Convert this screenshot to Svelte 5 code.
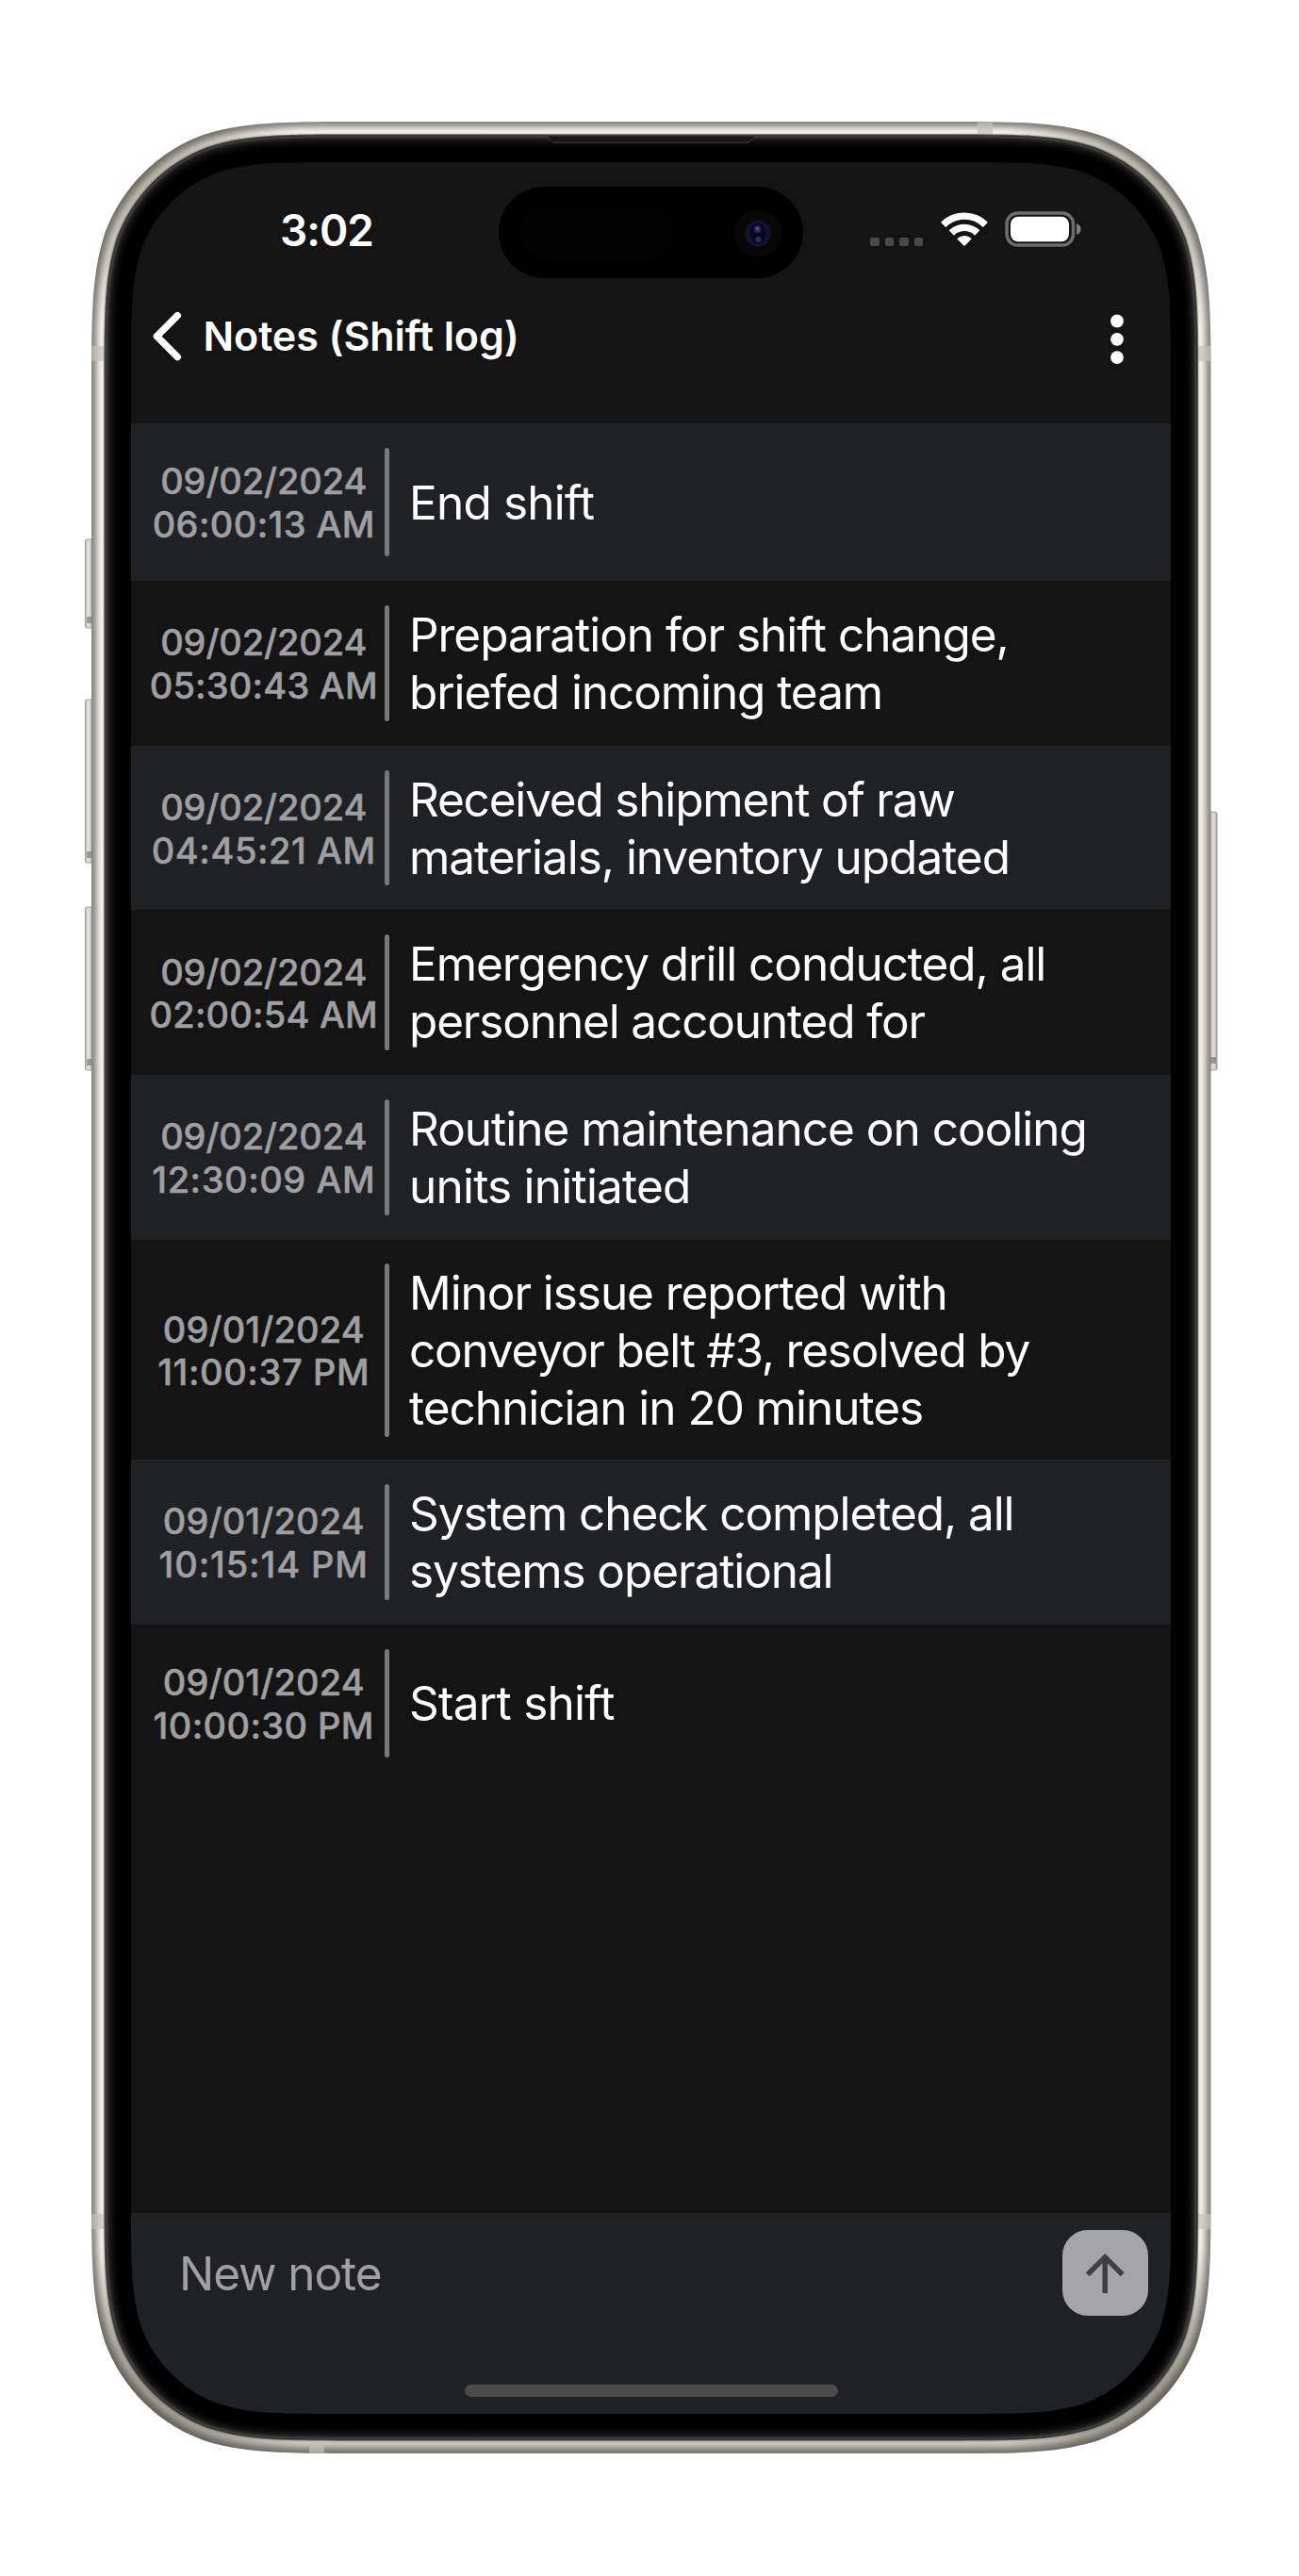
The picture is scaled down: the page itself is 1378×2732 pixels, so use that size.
<script>
  // Continuous-curvature rounded rectangle, as used for device outlines.
  function squircle(x, y, w, h, r) {
    const a = 1.528665 * r, b = 1.08849296 * r, c = 0.86840694 * r;
    const d = 0.63149379 * r, e = 0.07491139 * r, f = 0.37282383 * r, g = 0.16905956 * r;
    const R = x + w, B = y + h;
    return [
      `M${x + a} ${y}H${R - a}`,
      `C${R - b} ${y} ${R - c} ${y} ${R - d} ${y + e}`,
      `C${R - f} ${y + g} ${R - g} ${y + f} ${R - e} ${y + d}`,
      `C${R} ${y + c} ${R} ${y + b} ${R} ${y + a}`,
      `V${B - a}`,
      `C${R} ${B - b} ${R} ${B - c} ${R - e} ${B - d}`,
      `C${R - g} ${B - f} ${R - f} ${B - g} ${R - d} ${B - e}`,
      `C${R - c} ${B} ${R - b} ${B} ${R - a} ${B}`,
      `H${x + a}`,
      `C${x + b} ${B} ${x + c} ${B} ${x + d} ${B - e}`,
      `C${x + f} ${B - g} ${x + g} ${B - f} ${x + e} ${B - d}`,
      `C${x} ${B - c} ${x} ${B - b} ${x} ${B - a}`,
      `V${y + a}`,
      `C${x} ${y + b} ${x} ${y + c} ${x + e} ${y + d}`,
      `C${x + g} ${y + f} ${x + f} ${y + g} ${x + d} ${y + e}`,
      `C${x + c} ${y} ${x + b} ${y} ${x + a} ${y}Z`
    ].join('');
  }

  const W = 1187.5, H = 2473, RADIUS = 188;
  const ring = (inset) => squircle(inset, inset, W - 2 * inset, H - 2 * inset, RADIUS - inset);

  const metal = ['#8b8983', '#908e88', '#9b9993', '#a5a39c', '#b0aea7', '#bdbbb4', '#cac8c1', '#d7d4cc', '#e2dfd7', '#eae7df', '#f0ede5', '#f1eee6', '#dedbd2'];
  const bezel = ['#625f5a', '#2b2b2b', '#434444', '#343535', '#252626', '#1c1d1d', '#171717', '#131313', '#0f0f0f', '#0b0b0b', '#080808', '#060606', '#040404', '#020202', '#000'];

  const corners = [
    [50, 50, 0.34],
    [W - 50, 50, 0.34],
    [50, H - 50, 0.36],
    [W - 50, H - 50, 0.36]
  ];

  const screenClip = squircle(0, 0, 1103, 2388, 146);

  // Each line carries its own tracking in px.
  const notes = [
    { date: ['09/02/2024', -0.1], time: ['06:00:13 AM', 0.38], lines: [['End shift', -0.8]] },
    { date: ['09/02/2024', -0.1], time: ['05:30:43 AM', 0.2], lines: [['Preparation for shift change,', -1.03], ['briefed incoming team', -1.08]] },
    { date: ['09/02/2024', -0.1], time: ['04:45:21 AM', 0.55], lines: [['Received shipment of raw', -1.19], ['materials, inventory updated', -1.03]] },
    { date: ['09/02/2024', -0.1], time: ['02:00:54 AM', 0.2], lines: [['Emergency drill conducted, all', -1.05], ['personnel accounted for', -1.15]] },
    { date: ['09/02/2024', -0.1], time: ['12:30:09 AM', 0.55], lines: [['Routine maintenance on cooling', -0.99], ['units initiated', -0.78]] },
    { date: ['09/01/2024', 0.15], time: ['11:00:37 PM', 0.6], lines: [['Minor issue reported with', -1.06], ['conveyor belt #3, resolved by', -1.21], ['technician in 20 minutes', -1.02]] },
    { date: ['09/01/2024', 0.15], time: ['10:15:14 PM', 0.9], lines: [['System check completed, all', -1.08], ['systems operational', -1.09]] },
    { date: ['09/01/2024', 0.15], time: ['10:00:30 PM', 0.4], lines: [['Start shift', -0.73]] }
  ];
</script>

<div class="phone">
  <svg class="shell" viewBox="-8 0 1204 2476" width="1204" height="2476" aria-hidden="true">
    <defs>
      <linearGradient id="key" x1="0" x2="1" y1="0" y2="0">
        <stop offset="0" stop-color="#b5b3ae" />
        <stop offset=".3" stop-color="#e9e7e3" />
        <stop offset=".6" stop-color="#d0cec9" />
        <stop offset="1" stop-color="#8b8983" />
      </linearGradient>
      <linearGradient id="keyRight" x1="1" x2="0" y1="0" y2="0">
        <stop offset="0" stop-color="#a5a39e" />
        <stop offset=".3" stop-color="#dedcd8" />
        <stop offset=".65" stop-color="#d3d1cc" />
        <stop offset="1" stop-color="#96948f" />
      </linearGradient>
      <linearGradient id="shade" gradientUnits="userSpaceOnUse" x1="0" x2="0" y1="2250" y2="2473">
        <stop offset="0" stop-color="#3d382e" stop-opacity="0" />
        <stop offset=".6" stop-color="#3d382e" stop-opacity=".18" />
        <stop offset="1" stop-color="#3d382e" stop-opacity=".24" />
      </linearGradient>
      {#each corners as [cx, cy, strength], i}
        <radialGradient id="corner{i}" gradientUnits="userSpaceOnUse" {cx} {cy} r="170">
          <stop offset="0" stop-color="#3a362f" stop-opacity={strength} />
          <stop offset=".5" stop-color="#3a362f" stop-opacity={strength * 0.7} />
          <stop offset="1" stop-color="#3a362f" stop-opacity="0" />
        </radialGradient>
      {/each}
    </defs>
    {#each [[443, 94], [613, 173], [833, 173]] as [y, h]}
      <rect x="-6.5" {y} width="9" height={h} rx="2" fill="url(#key)" stroke="#8d8b86" stroke-width=".8" />
      <rect x="-5" y={y + h - 12} width="6" height="7" fill="#77746e" opacity=".65" />
    {/each}
    <rect x="1185" y="732" width="9" height="274" rx="2" fill="url(#keyRight)" stroke="#8d8b86" stroke-width=".8" />
    <rect x="1187" y="992" width="6" height="7" fill="#77746e" opacity=".65" />

    {#each metal as color, i}
      <path d={ring(i)} fill={color} />
    {/each}
    <path d={ring(0)} fill="url(#shade)" />
    {#each corners as _, i}
      <path d={ring(0)} fill="url(#corner{i})" />
    {/each}
    <g fill="#c4c1b9" opacity=".7">
      <rect x="0.5" y="238" width="14" height="16" />
      <rect x="1173" y="238" width="14" height="16" />
      <rect x="0.5" y="2219" width="14" height="16" />
      <rect x="1173" y="2219" width="14" height="16" />
      <rect x="940" y="0.5" width="16" height="14" />
      <rect x="231" y="2458.5" width="16" height="14" />
    </g>
    {#each bezel as color, i}
      <path d={ring(13.3 + i)} fill={color} />
    {/each}
    <path d="M484 15H704L700 20Q698.500 22.300 696 22.300H491Q488.500 22.300 487 20Z" fill="#171818" stroke="#3a3b3b" stroke-width="1" />
  </svg>

  <div class="screen" style:clip-path={`path("${screenClip}")`}>
    <header>
      <div class="status">
        <span class="clock">3:02</span>
        <div class="island">
          <svg viewBox="0 0 323 97" width="323" height="97" aria-hidden="true">
            <rect x="22" y="20" width="164" height="57" rx="28.5" fill="#020202" />
            <circle cx="275" cy="49.5" r="25" fill="#070707" />
            <circle cx="275" cy="49.5" r="14" fill="#12122b" />
            <ellipse cx="275" cy="49.5" rx="8" ry="11" fill="#070720" />
            <circle cx="274.5" cy="45" r="3.8" fill="#2a2860" />
            <circle cx="274.5" cy="44.5" r="1.3" fill="#6a62a0" />
            <circle cx="275.5" cy="56" r="3" fill="#15385a" />
          </svg>
        </div>
        <div class="dots"><i></i><i></i><i></i><i></i></div>
        <svg class="wifi" viewBox="0 0 50 36" width="50" height="36" aria-hidden="true">
          <g fill="none" stroke="#fff">
            <path d="M2.600 13.300A32 32 0 0 1 47.400 13.300" stroke-width="7.4" />
            <path d="M11.300 22A19.500 19.500 0 0 1 38.700 22" stroke-width="7.4" />
          </g>
          <path d="M17.300 28.300Q20.500 24.900 25 24.900T32.700 28.300L26.200 35Q25 36.100 23.800 35Z" fill="#fff" />
        </svg>
        <svg class="battery" viewBox="0 0 82 38" width="82" height="38" aria-hidden="true">
          <rect x="2" y="2" width="70.5" height="34" rx="11.5" fill="none" stroke="#6c6d6f" stroke-width="3.5" />
          <rect x="6" y="5.8" width="62" height="26.5" rx="8" fill="#fff" />
          <path d="M76 13Q80.600 14.600 80.600 19T76 25Z" fill="#7c7d7f" />
        </svg>
      </div>
      <div class="nav">
        <svg class="back" viewBox="0 0 32 54" width="32" height="54" aria-hidden="true">
          <path d="M27.300 4.700 5.400 26.700 27.300 48.700" fill="none" stroke="#fff" stroke-width="7.400" stroke-linecap="round" stroke-linejoin="round" />
        </svg>
        <h1>Notes (Shift log)</h1>
        <svg class="menu" viewBox="0 0 14 54" width="14" height="54" aria-hidden="true">
          <circle cx="7" cy="7.5" r="6.9" /><circle cx="7" cy="26.8" r="6.9" /><circle cx="7" cy="46.1" r="6.9" />
        </svg>
      </div>
    </header>

    <ul>
      {#each notes as note}
        <li class="lines-{note.lines.length}">
          <div class="stamp">
            <span style:letter-spacing="{note.date[1]}px">{note.date[0]}</span>
            <span style:letter-spacing="{note.time[1]}px">{note.time[0]}</span>
          </div>
          <div class="rule"></div>
          <p>
            {#each note.lines as [text, tracking]}
              <span style:letter-spacing="{tracking}px">{text}</span>
            {/each}
          </p>
        </li>
      {/each}
    </ul>

    <footer>
      <div class="compose">
        <span class="placeholder">New note</span>
        <button aria-label="Send">
          <svg viewBox="0 0 91 91" width="91" height="91" aria-hidden="true">
            <path d="M45.200 67V30M26.700 47.300 45.200 28.800 63.700 47.300" fill="none" stroke="#3f4042" stroke-width="5.500" />
          </svg>
        </button>
      </div>
      <div class="home"></div>
    </footer>
  </div>
</div>

<style>
  :global(body) {
    background: #fff;
  }
  .phone {
    position: relative;
    box-sizing: border-box;
    width: 1378px;
    height: 2732px;
    padding: 172px 0 0 139px;
    font-family: Inter, 'Liberation Sans', sans-serif;
    color: #fff;
  }
  .shell {
    position: absolute;
    left: 89px;
    top: 129px;
  }
  .screen {
    position: relative;
    display: flex;
    flex-direction: column;
    width: 1103px;
    height: 2388px;
    background: #141414;
  }
  header {
    height: 277px;
    flex: none;
  }
  .status {
    display: flex;
    align-items: flex-start;
    height: 158px;
    padding: 26px 0 0 158px;
    box-sizing: border-box;
  }
  .clock {
    width: 232px;
    padding-top: 18px;
    font-size: 46px;
    font-weight: 600;
    line-height: 56px;
    letter-spacing: -1px;
  }
  .island {
    width: 323px;
    height: 97px;
    border-radius: 48.5px;
    background: #000;
  }
  .island svg {
    display: block;
  }
  .dots {
    display: flex;
    gap: 6px;
    margin: 53.5px 18.5px 0 71px;
  }
  .dots i {
    width: 9.5px;
    height: 9.5px;
    border-radius: 2.5px;
    background: #48494b;
  }
  .wifi {
    margin: 27px 18.5px 0 0;
  }
  .battery {
    margin-top: 26px;
  }
  .nav {
    display: flex;
    align-items: flex-start;
    padding: 0 50px 0 21.5px;
  }
  h1 {
    flex: 1;
    margin: 0 0 0 23px;
    font-size: 43px;
    font-weight: 600;
    line-height: 52px;
    letter-spacing: -0.08px;
  }
  .menu {
    margin-top: 2.5px;
    fill: #fff;
  }
  ul {
    flex: 1;
    margin: 0;
    padding: 0;
    list-style: none;
  }
  li {
    display: flex;
    box-sizing: border-box;
    height: 174.6px;
    padding: 26px 0 26px 11px;
  }
  li:nth-child(odd) {
    background: #202125;
  }
  .lines-1 {
    height: 167.3px;
  }
  .lines-3 {
    height: 233.5px;
    padding-block: 25.5px 24.5px;
  }
  .stamp {
    display: flex;
    flex-direction: column;
    align-items: center;
    justify-content: center;
    box-sizing: border-box;
    width: 258px;
    padding: 3px 0 0 1.5px;
    color: #9f9fa1;
    font-size: 38px;
    font-weight: 500;
    line-height: 45.7px;
    white-space: nowrap;
    -webkit-text-stroke: 0.5px #9f9fa1;
  }
  .rule {
    width: 5px;
    border-radius: 2.5px;
    background: #79797b;
  }
  p {
    display: flex;
    flex-direction: column;
    justify-content: center;
    margin: 0 0 0 21px;
    padding-top: 1px;
    font-size: 49.5px;
    line-height: 60.9px;
    white-space: nowrap;
  }
  footer {
    height: 213px;
    flex: none;
    background: #202125;
  }
  .compose {
    display: flex;
    align-items: flex-start;
    justify-content: space-between;
    height: 182px;
    padding: 17.5px 24px 0 51px;
    box-sizing: border-box;
  }
  .placeholder {
    padding-top: 16px;
    color: #a1a1a3;
    font-size: 49.5px;
    line-height: 60px;
    letter-spacing: -1.1px;
  }
  button {
    width: 91px;
    height: 91px;
    padding: 0;
    border: 0;
    border-radius: 27px;
    background: #a5a5a7;
  }
  button svg {
    display: block;
  }
  .home {
    width: 396px;
    height: 13px;
    margin: 0 auto;
    border-radius: 6.5px;
    background: #4b4b4b;
  }
</style>
